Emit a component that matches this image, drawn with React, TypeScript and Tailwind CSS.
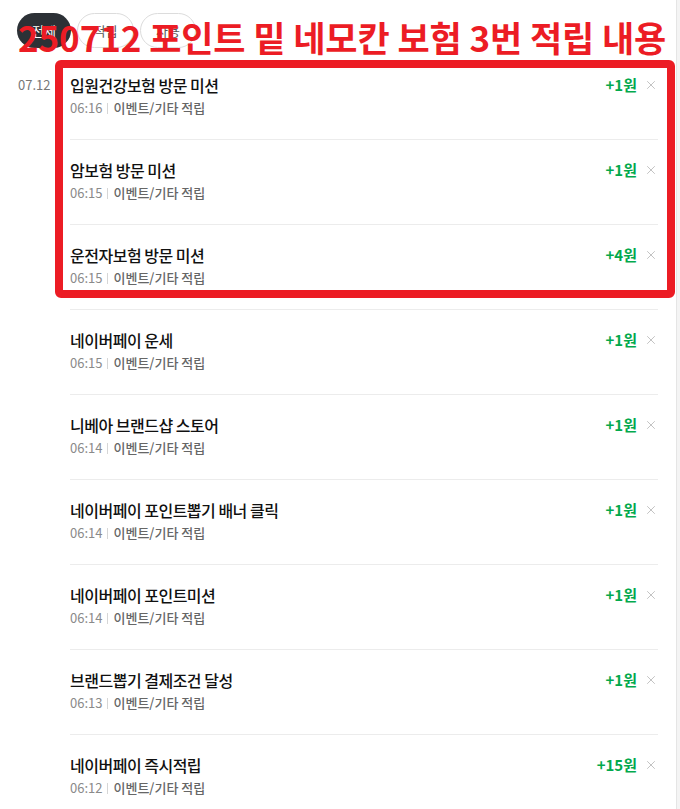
import { X } from "lucide-react"

const items = [
  { title: "입원건강보험 방문 미션", time: "06:16", amount: "+1원" },
  { title: "암보험 방문 미션", time: "06:15", amount: "+1원" },
  { title: "운전자보험 방문 미션", time: "06:15", amount: "+4원" },
  { title: "네이버페이 운세", time: "06:15", amount: "+1원" },
  { title: "니베아 브랜드샵 스토어", time: "06:14", amount: "+1원" },
  { title: "네이버페이 포인트뽑기 배너 클릭", time: "06:14", amount: "+1원" },
  { title: "네이버페이 포인트미션", time: "06:14", amount: "+1원" },
  { title: "브랜드뽑기 결제조건 달성", time: "06:13", amount: "+1원" },
  { title: "네이버페이 즉시적립", time: "06:12", amount: "+15원" },
]

const font = { fontFamily: '"Noto Sans CJK KR", "Noto Sans", sans-serif' }

export default function App() {
  return (
    <div className="relative h-[809px] w-[680px] overflow-hidden bg-white" style={font}>
      {/* right edge line */}
      <div className="absolute right-0 top-0 h-full w-[4px] border-l border-[#e5e5e5] bg-[#f4f4f4]" />

      {/* Tabs */}
      <div className="flex gap-[6px] pl-[17px] pt-[13px]">
        <button className="h-[35px] w-[54px] rounded-full bg-[#2c3136] text-[13px] text-white">전체</button>
        <button className="h-[35px] w-[57px] rounded-full border border-[#dcdcdc] text-[13px] text-[#555]">적립</button>
        <button className="h-[35px] w-[56px] rounded-full border border-[#dcdcdc] text-[13px] text-[#555]">사용</button>
      </div>

      {/* List */}
      <div className="mt-[7px] flex pl-[18px] pr-[22px]">
        <div className="w-[52px] pt-[20px] text-[13px] leading-[20px] text-[#777]">07.12</div>
        <ul className="flex-1">
          {items.map((item, i) => (
            <li
              key={i}
              className="flex items-start border-b border-[#ececec] pb-[21px] pt-[19px]"
            >
              <div className="flex-1">
                <div className="text-[16px] font-medium leading-[22px] tracking-[-0.5px] text-[#111]">
                  {item.title}
                </div>
                <div className="mt-[2px] flex items-center text-[13px] leading-[20px]">
                  <span className="text-[#8a8a8a]">{item.time}</span>
                  <span className="mx-[5px] h-[11px] w-px bg-[#d6d6d6]" />
                  <span className="font-medium text-[#666]">이벤트/기타 적립</span>
                </div>
              </div>
              <div className="flex items-center gap-[7px]">
                <span className="text-[15px] font-bold leading-[22px] text-[#03a94d]">{item.amount}</span>
                <X className="h-[14px] w-[14px] text-[#b0b0b0]" strokeWidth={1.3} />
              </div>
            </li>
          ))}
        </ul>
      </div>

      {/* annotation overlay */}
      <div className="absolute left-[18px] top-[19px] whitespace-nowrap text-[35px] font-bold leading-none tracking-[-0.1px] text-[#ec1c24]">
        250712 포인트 밑 네모칸 보험 3번 적립 내용
      </div>
      <div className="absolute left-[55px] top-[60px] h-[238px] w-[620px] rounded-[6px] border-[8px] border-[#ec1c24]" />
    </div>
  )
}
